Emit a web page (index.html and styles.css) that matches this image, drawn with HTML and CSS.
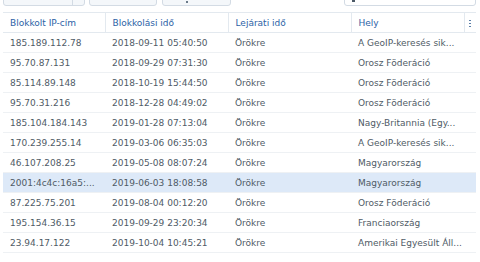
FILE: index.html
```html
<!DOCTYPE html>
<html>
<head>
<meta charset="utf-8">
<link rel="stylesheet" href="styles.css">
</head>
<body>
<div class="toolbar">
  <div class="btn split"><span class="main"></span><span class="arrow"></span></div>
  <div class="btn b2"></div>
  <div class="btn b3"><span class="dot"></span></div>
  <div class="spacer"></div>
  <div class="search"><span class="sicon"></span><span class="ph">Keresés</span></div>
</div>
<table class="grid">
  <colgroup>
    <col class="c1"><col class="c2"><col class="c3"><col class="c4"><col class="c5">
  </colgroup>
  <thead>
    <tr><th>Blokkolt IP-cím</th><th>Blokkolási idő</th><th>Lejárati idő</th><th>Hely</th><th class="menu"><span class="vdots"></span></th></tr>
  </thead>
  <tbody>
    <tr><td>185.189.112.78</td><td>2018-09-11 05:40:50</td><td>Örökre</td><td>A GeoIP-keresés sik...</td><td></td></tr>
    <tr><td>95.70.87.131</td><td>2018-09-29 07:31:30</td><td>Örökre</td><td>Orosz Föderáció</td><td></td></tr>
    <tr><td>85.114.89.148</td><td>2018-10-19 15:44:50</td><td>Örökre</td><td>Orosz Föderáció</td><td></td></tr>
    <tr><td>95.70.31.216</td><td>2018-12-28 04:49:02</td><td>Örökre</td><td>Orosz Föderáció</td><td></td></tr>
    <tr><td>185.104.184.143</td><td>2019-01-28 07:13:04</td><td>Örökre</td><td>Nagy-Britannia (Egy...</td><td></td></tr>
    <tr><td>170.239.255.14</td><td>2019-03-06 06:35:03</td><td>Örökre</td><td>A GeoIP-keresés sik...</td><td></td></tr>
    <tr><td>46.107.208.25</td><td>2019-05-08 08:07:24</td><td>Örökre</td><td>Magyarország</td><td></td></tr>
    <tr class="sel"><td>2001:4c4c:16a5:...</td><td>2019-06-03 18:08:58</td><td>Örökre</td><td>Magyarország</td><td></td></tr>
    <tr><td>87.225.75.201</td><td>2019-08-04 00:12:20</td><td>Örökre</td><td>Orosz Föderáció</td><td></td></tr>
    <tr><td>195.154.36.15</td><td>2019-09-29 23:20:34</td><td>Örökre</td><td>Franciaország</td><td></td></tr>
    <tr><td>23.94.17.122</td><td>2019-10-04 10:45:21</td><td>Örökre</td><td>Amerikai Egyesült Áll...</td><td></td></tr>
  </tbody>
</table>
</body>
</html>
```
FILE: styles.css
```css
html, body {
  margin: 0;
  padding: 0;
  background: #ffffff;
  font-family: "DejaVu Sans", Verdana, sans-serif;
  font-size: 9px;
  color: #4f5b66;
  overflow: hidden;
}
.toolbar {
  display: flex;
  align-items: flex-end;
  height: 6px;
  overflow: hidden;
  padding: 0 4px 0 3px;
}
.btn {
  height: 24px;
  box-sizing: border-box;
  border: 1px solid #d3dbe4;
  border-radius: 3px;
  background: #f4f7fa;
  flex: none;
  position: relative;
}
.split {
  width: 82px;
  display: flex;
}
.split .main {
  width: 68px;
  border-right: 1px solid #d3dbe4;
}
.b2 {
  width: 68px;
  margin-left: 4px;
}
.b3 {
  width: 69px;
  margin-left: 5px;
}
.b3 .dot {
  position: absolute;
  left: 23px;
  bottom: 2px;
  width: 2px;
  height: 2px;
  background: #6a7a8a;
}
.spacer { flex: 1; }
.search {
  width: 132px;
  height: 24px;
  box-sizing: border-box;
  border: 1px solid #d3dbe4;
  border-radius: 3px;
  background: #fff;
  position: relative;
}
.search .sicon {
  position: absolute;
  left: 7px;
  bottom: 3px;
  width: 3px;
  height: 2px;
  background: #4b5966;
}
.search .ph { display: none; }
.grid {
  margin: 6px 4px 0 3px;
  width: 473px;
  border-collapse: collapse;
  table-layout: fixed;
  border-top: 1px solid #e3e9ef;
}
.c1 { width: 102px; }
.c2 { width: 123px; }
.c3 { width: 123px; }
.c4 { width: 113px; }
.c5 { width: 12px; }
th {
  height: 19px;
  padding: 0 0 0 7px;
  text-align: left;
  font-weight: normal;
  color: #2c62a6;
  border-bottom: 1px solid #e3e9ef;
  border-left: 1px solid #e3e9ef;
  white-space: nowrap;
  overflow: hidden;
}
th:first-child { border-left: none; }
th.menu { padding: 0; text-align: center; }
.vdots {
  display: inline-block;
  width: 2px;
  height: 7px;
  background: repeating-linear-gradient(#5a7ea8 0 1px, #ffffff 1px 3px);
  vertical-align: middle;
}
td {
  height: 19px;
  padding: 0 0 0 7px;
  border-bottom: 1px solid #eef1f4;
  white-space: nowrap;
  overflow: hidden;
}
tr.sel td { background: #dde9f8; }
```
